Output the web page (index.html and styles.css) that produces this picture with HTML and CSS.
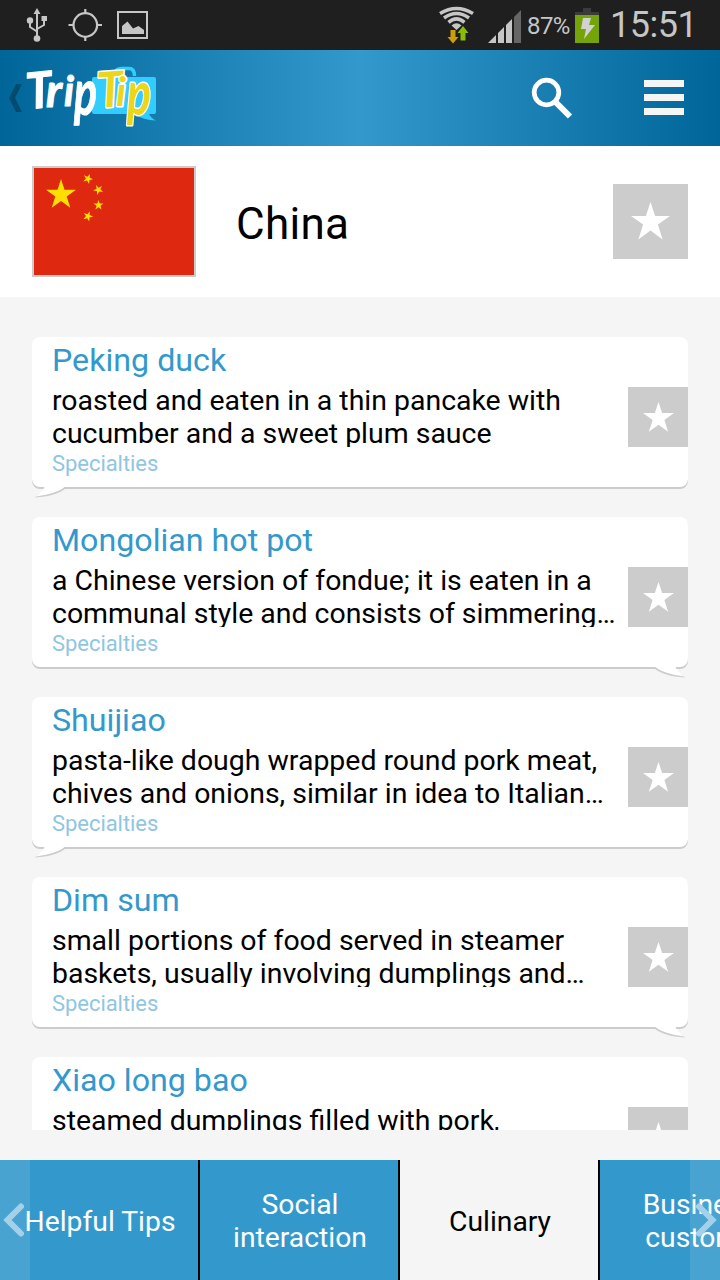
FILE: index.html
```
<!DOCTYPE html>
<html lang="en">
<head>
    <meta charset="UTF-8">
    <meta name="viewport" content="width=device-width, initial-scale=1.0">
    <title>TripTip - China</title>
    <link rel="stylesheet" href="styles.css">
</head>
<body>
    <svg class="defs" width="0" height="0">
        <symbol id="star" viewBox="-50 -50 100 100">
            <path d="M0-50 11.8-14.2H50L19 8 31 46 0 23-31 46-19 8-50-14.2H-11.8Z"/>
        </symbol>
        <symbol id="tail" viewBox="0 0 34 12">
            <path d="M33 1.500C25 8 15 10.500 1 11.600L2 10 12 4 30 1.500Z" fill="#ccc"/>
            <path d="M32 0C25 6 15 8.500 1 10.700 6 7.500 9 5 11 0Z" fill="#fff"/>
        </symbol>
    </svg>

    <div class="statusbar">
        <svg width="160" height="50" viewBox="0 0 160 50" fill="none" stroke="#c6c6c6">
            <!-- usb -->
            <path d="M37 11V38M30 21V27L37 31.500M44 19V25L37 29" stroke-width="2"/>
            <path d="M37 8 40.500 14H33.500Z" fill="#c6c6c6" stroke="none"/>
            <circle cx="30" cy="20.500" r="3.200" fill="#c6c6c6" stroke="none"/>
            <circle cx="37" cy="38.500" r="3.300" fill="#c6c6c6" stroke="none"/>
            <path d="M41.500 16H47V21H41.500Z" fill="#c6c6c6" stroke="none"/>
            <!-- gps -->
            <circle cx="85.300" cy="25" r="11.800" stroke-width="2.200"/>
            <path d="M85.300 9V14M85.300 36V41M68.500 25H74M96.500 25H102" stroke-width="2.200"/>
            <!-- picture -->
            <rect x="118" y="12" width="29" height="26" stroke-width="2"/>
            <path d="M122 34V26L127.500 21.500 133 28.500 138.500 26 144 30V34Z" fill="#c6c6c6" stroke="none"/>
        </svg>
        <div class="status-right">
            <svg width="96" height="50" viewBox="430 0 96 50">
                <!-- wifi -->
                <g fill="none" stroke="#c6c6c6" stroke-width="3.500">
                    <path d="M440 13.500Q456.500 3.500 473 13.500"/>
                    <path d="M444 18Q456.500 9 469 18"/>
                    <path d="M448.500 22.300Q456.500 15.500 464.500 22.300"/>
                </g>
                <path d="M451.500 25.500Q456.500 21 461.500 25.500L456.500 30Z" fill="#c6c6c6"/>
                <path d="M450.500 30H455.500V37H458.500L453 43.500 447.500 37H450.500Z" fill="#cc9f0a"/>
                <path d="M460.500 40.500H465.500V33H468.500L463 26 457.500 33H460.500Z" fill="#89bd0b"/>
                <!-- signal -->
                <path d="M488 43 496 35V43ZM498 33 504 27V43H498ZM506 25 512 19V43H506Z" fill="#c6c6c6"/>
                <path d="M514 17 521 10V43H514Z" fill="#666"/>
            </svg>
            <span class="percent">87%</span>
            <svg class="battery" width="24" height="50" viewBox="0 0 24 50">
                <path d="M0 12H8V8H16V12H24V16H0Z" fill="#3b3b3b"/>
                <path d="M0 15H24V43H0Z" fill="#74a30a"/>
                <path d="M8 18H16L14 25H20L9 39 11 29H6Z" fill="#d2d2d2"/>
            </svg>
            <span class="clock">15:51</span>
        </div>
    </div>

    <div class="header">
        <svg class="logo" width="170" height="96" viewBox="0 50 170 96">
            <path d="M16 84H22L15 98 22 112H16L9 98Z" fill="#024b70"/>
            <path d="M116 79V73Q116 68.500 121 68.500H129Q134.500 68.500 134.500 76" fill="none" stroke="#3cf" stroke-width="3.500"/>
            <path d="M94 77H154Q156 77 156 79V112Q156 114 154 114H149Q151 118 156 120.500 143 120 135 114H94Q92 114 92 112V79Q92 77 94 77Z" fill="#3cf"/>
            <g class="logo-text logo-white">
                <text x="26" y="108" font-size="50" textLength="26" lengthAdjust="spacingAndGlyphs" transform="rotate(-6 40 90)">T</text>
                <text x="46" y="107" font-size="45" textLength="16" lengthAdjust="spacingAndGlyphs">r</text>
                <text x="64" y="106" font-size="42" textLength="10" lengthAdjust="spacingAndGlyphs">i</text>
                <text x="74" y="115" font-size="64" textLength="23" lengthAdjust="spacingAndGlyphs">p</text>
            </g>
            <g class="logo-text logo-yellow">
                <text x="97" y="107" font-size="49" textLength="26" lengthAdjust="spacingAndGlyphs" transform="rotate(-4 110 90)">T</text>
                <text x="116" y="106" font-size="41" textLength="10" lengthAdjust="spacingAndGlyphs">i</text>
                <text x="127" y="115" font-size="61" textLength="24" lengthAdjust="spacingAndGlyphs">p</text>
            </g>
        </svg>
        <div class="actions">
            <svg width="42" height="42" viewBox="0 0 42 42" fill="none" stroke="#fff">
                <circle cx="15.500" cy="15.500" r="12.300" stroke-width="4.700"/>
                <path d="M23.500 24 39 39.500" stroke-width="6"/>
            </svg>
            <div class="menu"><i></i><i></i><i></i></div>
        </div>
    </div>

    <div class="country">
        <svg class="flag" width="160" height="107" viewBox="0 0 160 107" fill="#ffde00">
            <use href="#star" x="12" y="11" width="30" height="30"/>
            <use href="#star" x="49" y="5.500" width="10" height="10" transform="rotate(23 54 10.500)"/>
            <use href="#star" x="59.500" y="16.500" width="10" height="10" transform="rotate(46 64.500 21.500)"/>
            <use href="#star" x="59.500" y="32" width="10" height="10"/>
            <use href="#star" x="49" y="43" width="10" height="10" transform="rotate(21 54 48)"/>
        </svg>
        <h1>China</h1>
        <div class="fav fav-big"><svg width="39" height="39"><use href="#star"/></svg></div>
    </div>

    <div class="list">
        <div class="card">
            <div class="text">
                <h2>Peking duck</h2>
                <p>roasted and eaten in a thin pancake with<br>cucumber and a sweet plum sauce</p>
                <span class="tag">Specialties</span>
            </div>
            <div class="fav"><svg width="31" height="31"><use href="#star"/></svg></div>
            <svg class="tail"><use href="#tail"/></svg>
        </div>
        <div class="card">
            <div class="text">
                <h2>Mongolian hot pot</h2>
                <p>a Chinese version of fondue; it is eaten in a<br>communal style and consists of simmering…</p>
                <span class="tag">Specialties</span>
            </div>
            <div class="fav"><svg width="31" height="31"><use href="#star"/></svg></div>
            <svg class="tail tail-right"><use href="#tail"/></svg>
        </div>
        <div class="card">
            <div class="text">
                <h2>Shuijiao</h2>
                <p>pasta-like dough wrapped round pork meat,<br>chives and onions, similar in idea to Italian…</p>
                <span class="tag">Specialties</span>
            </div>
            <div class="fav"><svg width="31" height="31"><use href="#star"/></svg></div>
            <svg class="tail"><use href="#tail"/></svg>
        </div>
        <div class="card">
            <div class="text">
                <h2>Dim sum</h2>
                <p>small portions of food served in steamer<br>baskets, usually involving dumplings and…</p>
                <span class="tag">Specialties</span>
            </div>
            <div class="fav"><svg width="31" height="31"><use href="#star"/></svg></div>
            <svg class="tail tail-right"><use href="#tail"/></svg>
        </div>
        <div class="card">
            <div class="text">
                <h2>Xiao long bao</h2>
                <p>steamed dumplings filled with pork,</p>
            </div>
            <div class="fav"><svg width="31" height="31"><use href="#star"/></svg></div>
        </div>
    </div>

    <div class="tabs">
        <div class="tab">Helpful Tips</div>
        <div class="tab">Social<br>interaction</div>
        <div class="tab active">Culinary</div>
        <div class="tab">Business<br>customs</div>
        <div class="arrow">
            <svg width="30" height="120" viewBox="0 0 30 120"><path d="M21 46.500 7.500 60 21 73.500"/></svg>
        </div>
        <div class="arrow arrow-right">
            <svg width="30" height="120" viewBox="0 0 30 120"><path d="M9 46.500 22.500 60 9 73.500"/></svg>
        </div>
    </div>
</body>
</html>
```
FILE: styles.css
```
* {
    box-sizing: border-box;
}
body {
    width: 720px;
    height: 1280px;
    margin: 0;
    display: flex;
    flex-direction: column;
    overflow: hidden;
    background-color: #f5f5f5;
    color: #000;
    font-family: Roboto, sans-serif;
}
svg {
    display: block;
    flex: none;
}
h1, h2, p {
    margin: 0;
    font-weight: normal;
}
.defs {
    position: absolute;
}

.statusbar {
    height: 50px;
    flex: none;
    display: flex;
    justify-content: space-between;
    background-color: #1f1f1f;
    color: #c6c6c6;
}
.status-right {
    display: flex;
    align-items: center;
    width: 290px;
    white-space: nowrap;
}
.percent {
    width: 49px;
    padding: 2px 0 0 1px;
    font-size: 24px;
    letter-spacing: -0.6px;
}
.clock {
    padding-left: 11px;
    font-size: 36px;
    letter-spacing: -0.5px;
}

.header {
    height: 96px;
    flex: none;
    display: flex;
    justify-content: space-between;
    background: linear-gradient(to right, #069, #39c 50%, #069);
}
.logo-text {
    font-family: Lato, sans-serif;
    font-style: italic;
    font-weight: bold;
    stroke-linejoin: round;
}
.logo-white {
    fill: #fff;
    stroke: #fff;
    stroke-width: 1px;
}
.logo-yellow {
    fill: #ebd61c;
    stroke: #fff;
    stroke-width: 3px;
    paint-order: stroke;
}
.actions {
    display: flex;
    align-items: center;
    gap: 71px;
    padding-right: 36px;
}
.menu {
    width: 40px;
    display: flex;
    flex-direction: column;
    gap: 7px;
    padding-bottom: 1px;
}
.menu i {
    height: 7px;
    background-color: #f5f5f5;
}

.country {
    height: 151px;
    flex: none;
    display: flex;
    align-items: center;
    padding: 0 32px;
    background-color: #fff;
}
.flag {
    box-sizing: content-box;
    border: 2px solid #ccc;
    background-color: #de2910;
}
h1 {
    flex: 1;
    padding: 4px 0 0 40px;
    font-size: 44px;
    letter-spacing: 0.3px;
}
.fav {
    width: 60px;
    height: 60px;
    flex: none;
    display: flex;
    align-items: center;
    justify-content: center;
    background-color: #ccc;
    fill: #fff;
}
.fav-big {
    width: 75px;
    height: 75px;
}

.list {
    height: 833px;
    flex: none;
    display: flex;
    flex-direction: column;
    gap: 30px;
    padding: 40px 32px 0;
    overflow: hidden;
}
.card {
    position: relative;
    height: 150px;
    flex: none;
    display: flex;
    background-color: #fff;
    border-radius: 8px;
    box-shadow: 0 2px 0 #ccc;
}
.card .fav {
    margin-top: 50px;
}
.text {
    flex: 1;
    padding: 4px 0 0 20px;
    white-space: nowrap;
}
h2 {
    height: 43px;
    line-height: 38px;
    font-size: 32.2px;
    color: #39c;
}
p {
    height: 63px;
    overflow: hidden;
    font-size: 28.45px;
    line-height: 33px;
}
.tag {
    display: block;
    padding-top: 4px;
    font-size: 22px;
    line-height: 26px;
    letter-spacing: -0.05px;
    color: #8fc6e2;
}
.tail {
    position: absolute;
    left: 2px;
    top: 149px;
    width: 34px;
    height: 12px;
}
.tail-right {
    left: auto;
    right: 2px;
    transform: scaleX(-1);
}

.tabs {
    position: relative;
    height: 120px;
    flex: none;
    display: flex;
    margin-top: 30px;
    overflow: hidden;
}
.tab {
    width: 200px;
    flex: none;
    display: flex;
    align-items: center;
    justify-content: center;
    padding: 2px 0 0 2px;
    border-right: 2px solid #000;
    background-color: #39c;
    color: #fff;
    font-size: 28.3px;
    line-height: 33px;
    text-align: center;
}
.tab.active {
    background-color: #f5f5f5;
    color: #000;
}
/* scroll hints over the tab strip */
.arrow {
    position: absolute;
    left: 0;
    top: 0;
    background-color: rgba(245, 245, 245, 0.11);
}
.arrow-right {
    left: auto;
    right: 0;
}
.arrow path {
    fill: none;
    stroke: #a5d0e9;
    stroke-width: 6px;
    stroke-linecap: round;
}
```
